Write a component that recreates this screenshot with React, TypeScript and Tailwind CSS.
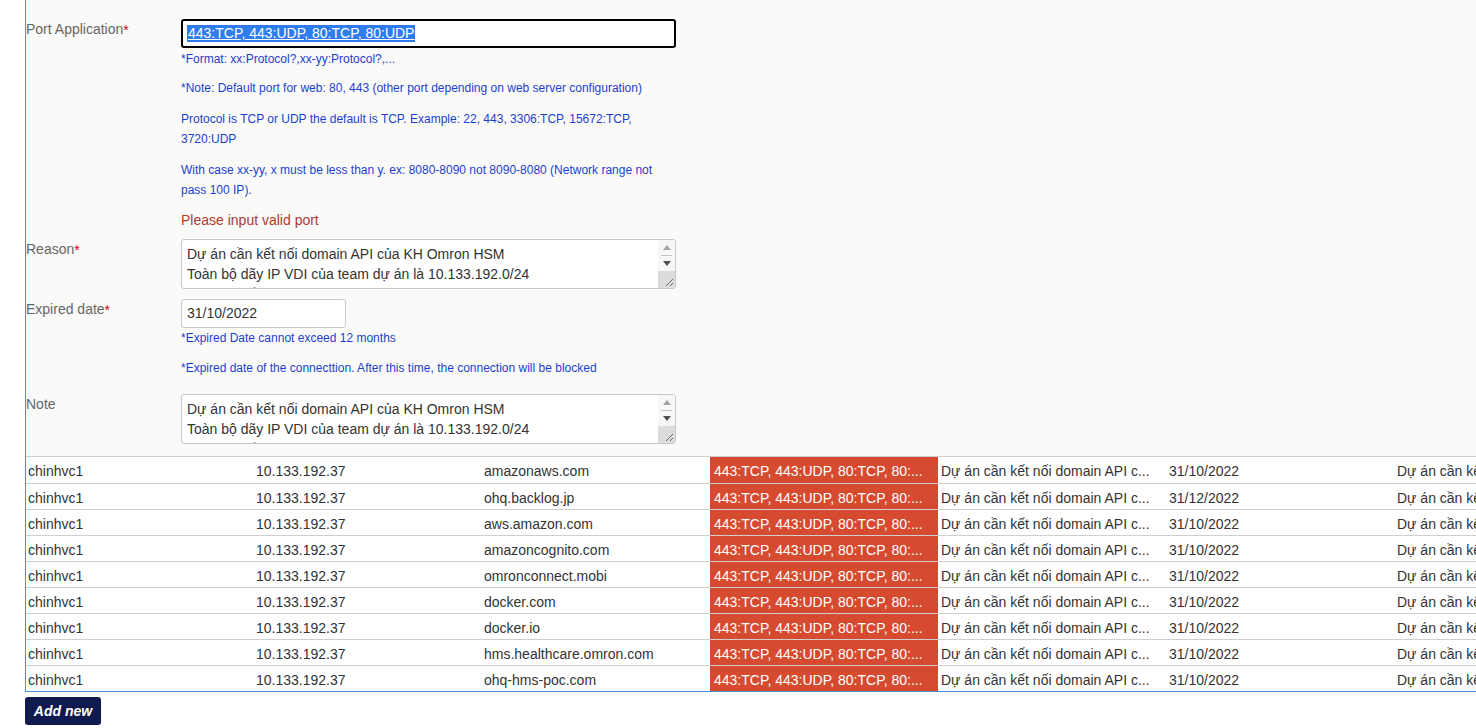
import React from 'react';

const reasonLines = [
    'Dự án cần kết nối domain API của KH Omron HSM',
    'Toàn bộ dãy IP VDI của team dự án là 10.133.192.0/24',
    'Các máy cần truy cập domain API qua port 443, 80',
];

const rows = [
    { domain: 'amazonaws.com', date: '31/10/2022' },
    { domain: 'ohq.backlog.jp', date: '31/12/2022' },
    { domain: 'aws.amazon.com', date: '31/10/2022' },
    { domain: 'amazoncognito.com', date: '31/10/2022' },
    { domain: 'omronconnect.mobi', date: '31/10/2022' },
    { domain: 'docker.com', date: '31/10/2022' },
    { domain: 'docker.io', date: '31/10/2022' },
    { domain: 'hms.healthcare.omron.com', date: '31/10/2022' },
    { domain: 'ohq-hms-poc.com', date: '31/10/2022' },
];

const Label: React.FC<{ text: string; required?: boolean }> = ({ text, required }) => (
    <div className="text-[14px] leading-[20px] text-[#666]">
        {text}
        {required && <sup className="text-[#d0021b] text-[14px] relative top-[1px]">*</sup>}
    </div>
);

const Help: React.FC<{ children: React.ReactNode; mt: string }> = ({ children, mt }) => (
    <p className={`text-[12px] leading-[20px] text-[#1a3fcf] ${mt}`}>{children}</p>
);

// textarea drawn with its classic scrollbar and resize grip
const TextBox: React.FC = () => (
    <div className="flex w-[495px] h-[50px] border border-[#c8c8c8] rounded-[3px] bg-white overflow-hidden">
        <div className="flex-1 overflow-hidden px-[5px] pt-[4px] text-[14px] leading-[20px] text-[#333]">
            {reasonLines.map(l => (
                <div key={l} className="whitespace-nowrap">{l}</div>
            ))}
        </div>
        <div className="w-[17px] flex flex-col bg-[#f7f7f7]">
            <div className="h-[15px] flex items-center justify-center">
                <svg width="8" height="5" viewBox="0 0 8 5"><path d="M4 0 L8 5 L0 5 Z" fill="#a3a3a3" /></svg>
            </div>
            <div className="mx-[3px] h-px bg-[#c4c4c4]" />
            <div className="h-[15px] flex items-center justify-center">
                <svg width="8" height="5" viewBox="0 0 8 5"><path d="M0 0 L8 0 L4 5 Z" fill="#505050" /></svg>
            </div>
            <div className="flex-1 bg-[#dcdcdc] relative">
                <svg className="absolute right-px bottom-px" width="10" height="10" viewBox="0 0 10 10">
                    <path d="M9 2 L2 9 M9 6 L6 9" stroke="#6a6a6a" strokeWidth="1" />
                </svg>
            </div>
        </div>
    </div>
);

const App: React.FC = () => {
    return (
        <div className="min-h-[728px] bg-white overflow-hidden" style={{ fontFamily: '"Liberation Sans", Arial, sans-serif' }}>
            <div className="ml-[25px] border-l border-[#4a90d9]">
                <div className="bg-[#fafaf9] pt-[19px] pb-[12px]">
                    <div className="flex">
                        <div className="w-[155px] shrink-0"><Label text="Port Application" required /></div>
                        <div className="w-[495px]">
                            <div className="h-[29px] border-2 border-black rounded-[3px] bg-white flex items-center pl-[4px]">
                                <span className="bg-[#2f7bf0] text-white underline text-[14px] leading-[17px] px-px">443:TCP, 443:UDP, 80:TCP, 80:UDP</span>
                            </div>
                            <Help mt="mt-px">*Format: xx:Protocol?,xx-yy:Protocol?,...</Help>
                            <Help mt="mt-[9px]">*Note: Default port for web: 80, 443 (other port depending on web server configuration)</Help>
                            <Help mt="mt-[11px]">Protocol is TCP or UDP the default is TCP. Example: 22, 443, 3306:TCP, 15672:TCP, 3720:UDP</Help>
                            <Help mt="mt-[11px]">With case xx-yy, x must be less than y. ex: 8080-8090 not 8090-8080 (Network range not pass 100 IP).</Help>
                            <p className="mt-[10px] text-[14px] leading-[20px] text-[#b03a2e]">Please input valid port</p>
                        </div>
                    </div>
                    <div className="flex mt-[9px]">
                        <div className="w-[155px] shrink-0"><Label text="Reason" required /></div>
                        <TextBox />
                    </div>
                    <div className="flex mt-[10px]">
                        <div className="w-[155px] shrink-0"><Label text="Expired date" required /></div>
                        <div className="w-[495px]">
                            <div className="w-[165px] h-[29px] border border-[#c8c8c8] rounded-[3px] bg-white flex items-center pl-[5px] text-[14px] text-[#333]">31/10/2022</div>
                            <p className="text-[12px] leading-[20px] text-[#1a3fcf]">*Expired Date cannot exceed 12 months</p>
                            <p className="mt-[10px] text-[12px] leading-[20px] text-[#1a3fcf]">*Expired date of the connecttion. After this time, the connection will be blocked</p>
                        </div>
                    </div>
                    <div className="flex mt-[16px]">
                        <div className="w-[155px] shrink-0"><Label text="Note" /></div>
                        <TextBox />
                    </div>
                </div>
                <div className="bg-white border-t border-[#cfcfcf] border-b border-b-[#4a90d9] overflow-hidden">
                    <table className="table-fixed border-collapse w-[1596px] text-[14px] text-[#333]">
                        <colgroup>
                            {Array.from({ length: 7 }).map((_, i) => (
                                <col key={i} className="w-[228px]" />
                            ))}
                        </colgroup>
                        <tbody>
                            {rows.map((r, i) => (
                                <tr key={r.domain} className={`h-[26px] ${i < rows.length - 1 ? 'border-b border-[#cfcfcf]' : ''}`}>
                                    <td className="pl-[2px] pt-[4px] whitespace-nowrap overflow-hidden">chinhvc1</td>
                                    <td className="pl-[2px] pt-[4px] whitespace-nowrap overflow-hidden">10.133.192.37</td>
                                    <td className="pl-[2px] pt-[4px] whitespace-nowrap overflow-hidden">{r.domain}</td>
                                    <td className="pl-[4px] pt-[4px] whitespace-nowrap overflow-hidden bg-[#d64b2f] text-white">443:TCP, 443:UDP, 80:TCP, 80:...</td>
                                    <td className="pl-[3px] pt-[4px] whitespace-nowrap overflow-hidden">Dự án cần kết nối domain API c...</td>
                                    <td className="pl-[3px] pt-[4px] whitespace-nowrap overflow-hidden">{r.date}</td>
                                    <td className="pl-[3px] pt-[4px] whitespace-nowrap overflow-hidden">Dự án cần kết nối domain API của KH Omron HSM</td>
                                </tr>
                            ))}
                        </tbody>
                    </table>
                </div>
            </div>
            <button className="ml-[25px] mt-[5px] w-[76px] h-[28px] rounded-[3px] bg-[#111a4f] text-white text-[14px] font-bold italic">
                Add new
            </button>
        </div>
    );
};

export default App;
